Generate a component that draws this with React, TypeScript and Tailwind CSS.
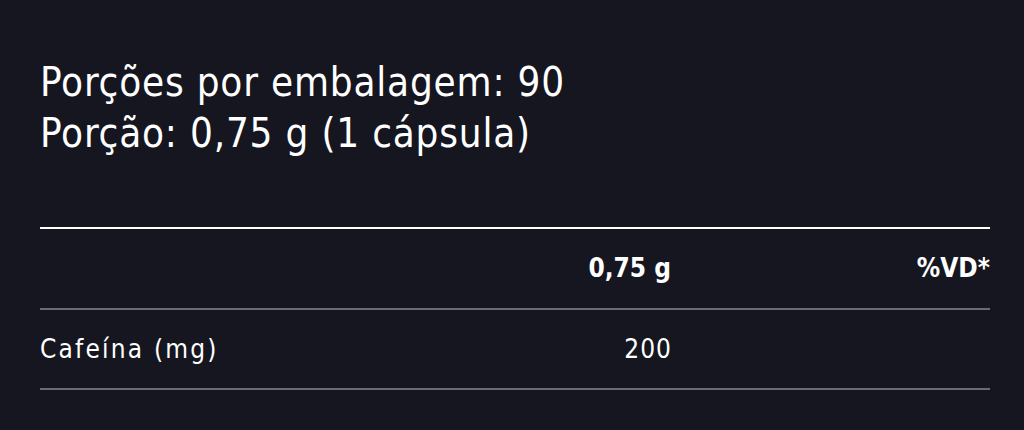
export default function App() {
  return (
    <div className="w-[1024px] h-[430px] bg-[#161620] text-white px-10 pt-[57px] font-['Liberation_Sans_Narrow','DejaVu_Sans_Condensed',sans-serif]">
      <div className="text-[40px] leading-[51px] tracking-[0.8px]">
        <p>Porções por embalagem: 90</p>
        <p>Porção: 0,75 g (1 cápsula)</p>
      </div>

      <div className="mt-[68px] w-[950px] border-t-2 border-white">
        <div className="grid grid-cols-[1fr_200px_319px] items-center h-[81px] border-b-2 border-[#6b6b72] text-[26px] font-bold">
          <span />
          <span className="text-right">0,75 g</span>
          <span className="text-right">%VD*</span>
        </div>
        <div className="grid grid-cols-[1fr_200px_319px] items-center h-[80px] border-b-2 border-[#6b6b72] text-[26px]">
          <span className="tracking-[2.2px]">Cafeína (mg)</span>
          <span className="text-right tracking-[1px] -mr-[1px]">200</span>
          <span />
        </div>
      </div>
    </div>
  );
}
